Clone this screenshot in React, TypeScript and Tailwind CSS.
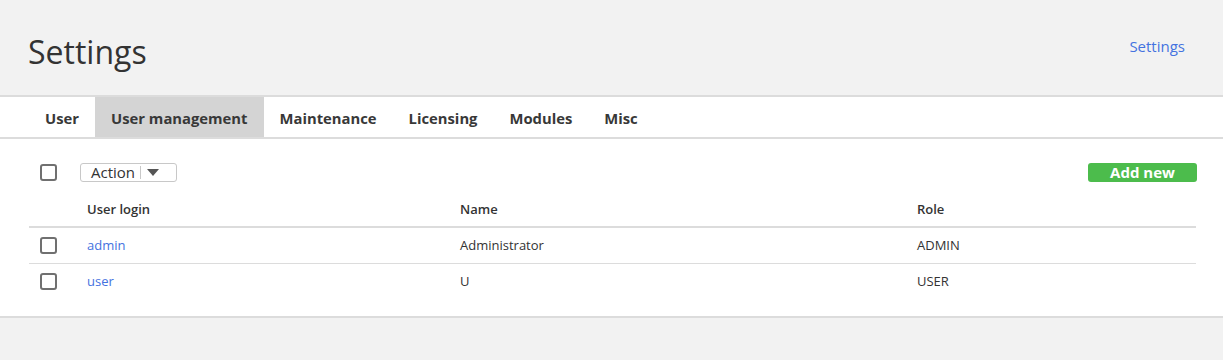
import React from "react";

const Checkbox = () => (
  <span className="block w-[17px] h-[17px] rounded-[3px] border-2 border-[#707070] bg-white" />
);

export default function App() {
  const tabs = ["User", "User management", "Maintenance", "Licensing", "Modules", "Misc"];
  const rows = [
    { login: "admin", name: "Administrator", role: "ADMIN" },
    { login: "user", name: "U", role: "USER" },
  ];
  return (
    <div className="min-h-[360px] bg-[#f2f2f2] text-[#333] font-['Open_Sans',sans-serif]">
      <div className="h-[95px] flex items-start justify-between pl-[28px] pr-[38px] pt-[30px]">
        <h1 className="text-[32px] leading-[44px] font-normal text-[#333]">Settings</h1>
        <a className="mt-[6px] text-[15px] leading-[20px] text-[#4472e0]">Settings</a>
      </div>
      <div className="bg-white border-y-2 border-[#dcdcdc] flex pl-[29px]">
        {tabs.map((t) => (
          <div
            key={t}
            className={
              "h-[40px] flex items-center pt-[2px] px-4 text-[14.8px] font-bold text-[#383838] " +
              (t === "User management" ? "bg-[#d4d4d4]" : "")
            }
          >
            {t}
          </div>
        ))}
      </div>
      <div className="bg-white border-b-2 border-[#dcdcdc] pl-[29px] pr-[26px] pt-[24px] pb-[17px]">
        <div className="h-[19px] flex items-center">
          <div className="ml-[11px]">
            <Checkbox />
          </div>
          <div className="ml-[23px] h-[19px] w-[97px] border border-[#c8c8c8] rounded-[3px] flex items-center">
            <span className="pl-[10px] text-[15px] leading-[17px] text-[#333] w-[59px]">Action</span>
            <span className="h-[13px] w-px bg-[#c8c8c8]" />
            <svg width="12" height="7" viewBox="0 0 12 7" className="ml-[6px]">
              <path d="M0 0 H12 L6 7 Z" fill="#555" />
            </svg>
          </div>
          <button className="ml-auto h-[19px] w-[109px] rounded-[3px] bg-[#4cbc4c] text-white text-[15px] font-bold leading-[19px]">
            Add new
          </button>
        </div>
        <div className="mr-[1px]">
          <div className="grid grid-cols-[58px_373px_457px_1fr] h-[46px] pt-[12px] items-center border-b-2 border-[#dcdcdc] text-[13px] font-semibold text-[#333]">
            <span />
            <span>User login</span>
            <span>Name</span>
            <span>Role</span>
          </div>
          {rows.map((r, i) => (
            <div
              key={r.login}
              className={
                "grid grid-cols-[58px_373px_457px_1fr] items-center text-[13px] text-[#333] " +
                (i === 0 ? "h-[36px] border-b border-[#dcdcdc]" : "h-[35px]")
              }
            >
              <span className="pl-[11px]">
                <Checkbox />
              </span>
              <a className="text-[#4472e0]">{r.login}</a>
              <span>{r.name}</span>
              <span>{r.role}</span>
            </div>
          ))}
        </div>
      </div>
    </div>
  );
}
